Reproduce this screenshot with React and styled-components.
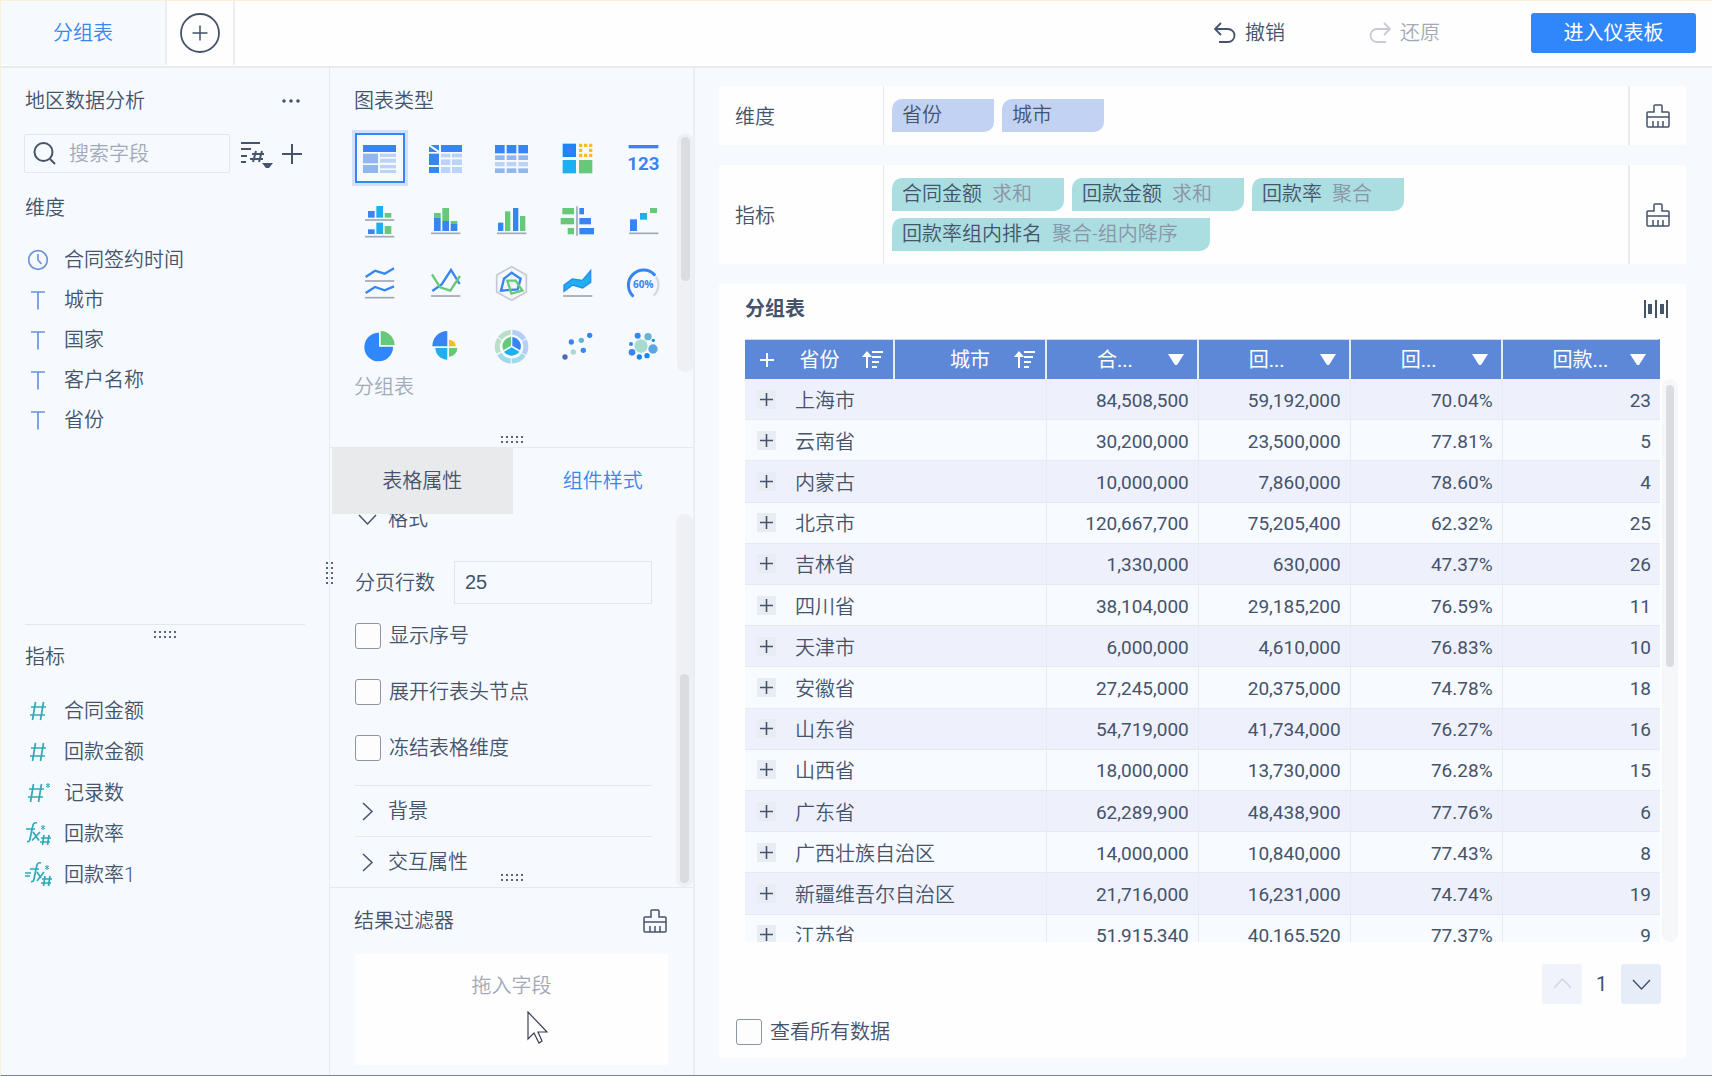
import React, {useState} from 'react'
import styled, {createGlobalStyle, css} from 'styled-components'

const GlobalStyle = createGlobalStyle`
  * {
    box-sizing: border-box;
  }
  body {
    margin: 0;
    color: #45536b;
    background: #f6fafe;
    font-family: Roboto, 'Noto Sans CJK SC', sans-serif;
    font-size: 20px;
    font-weight: 350;
    line-height: 30px;
  }
  button,
  input {
    font: inherit;
    color: inherit;
  }
  button {
    padding: 0;
    border: none;
    background: none;
    cursor: pointer;
  }
  h2,
  ul {
    margin: 0;
    padding: 0;
    font: inherit;
    list-style: none;
  }
  svg {
    display: block;
    flex: none;
  }
`

const Page = styled.div`
  display: flex;
  flex-direction: column;
  height: 100vh;
  min-height: 900px;
  border-top: 1px solid #f8f0d8;
  border-left: 1px solid #f8f0d8;
  border-bottom: 1px solid #7c8490;
`

const TopBar = styled.header`
  display: flex;
  align-items: center;
  flex: none;
  height: 67px;
  padding: 0 16px 1px 0;
  background: #fefefe;
  border-bottom: 2px solid #e9ecef;
`
const SheetTab = styled.button`
  align-self: stretch;
  width: 166px;
  color: #3685f2;
  background: #f6fafe;
  border-right: 2px solid #ebedf2;
`
const AddSheet = styled.div`
  display: flex;
  align-items: center;
  justify-content: center;
  align-self: stretch;
  width: 68px;
  margin-right: auto;
  border-right: 2px solid #ebedf2;
`
const HistoryButton = styled.button`
  display: flex;
  align-items: center;
  gap: 9px;
  margin-right: 84px;
  color: ${(p) => (p.disabled ? '#a3a9b8' : '#45536b')};
  svg {
    opacity: ${(p) => (p.disabled ? 0.6 : 1)};
  }
`
const PrimaryButton = styled.button`
  width: 165px;
  height: 40px;
  margin-left: 7px;
  color: #fff;
  font-weight: 400;
  background: #3086fb;
  border-radius: 3px;
`

const Columns = styled.div`
  display: flex;
  flex: 1;
  min-height: 0;
`
const FieldPanel = styled.aside`
  position: relative;
  display: flex;
  flex-direction: column;
  flex: none;
  width: 329px;
  border-right: 1px solid #e6e9ee;
`
const PanelHead = styled.div`
  display: flex;
  align-items: center;
  justify-content: space-between;
  flex: none;
  height: 66px;
  padding: 0 ${(p) => p.$end || 29}px 0 24px;
`
const SearchRow = styled.div`
  display: flex;
  align-items: center;
  gap: 9px;
  padding: 0 27px 0 23px;
`
const SearchBox = styled.label`
  display: flex;
  align-items: center;
  gap: 13px;
  flex: 1;
  min-width: 0;
  height: 39px;
  margin-right: 2px;
  padding-left: 8px;
  border: 1px solid #e6e6ea;
  border-radius: 2px;
  input {
    width: 100%;
    min-width: 0;
    padding: 0;
    border: none;
    outline: none;
    background: none;
  }
  input::placeholder {
    color: #a3a9b8;
    opacity: 1;
  }
`
const FieldGroup = styled.section`
  flex: ${(p) => (p.$measures ? '0 0 451px' : '1 1 0')};
  min-height: 0;
  margin: 0 24px;
  border-top: ${(p) => (p.$measures ? '1px solid #e6e6ea' : 'none')};
  h2 {
    margin: ${(p) => (p.$measures ? '4px 0 18px' : '20px 0 17px')};
  }
`
const FieldItem = styled.li`
  display: flex;
  align-items: center;
  gap: 13px;
  height: ${(p) => (p.$measures ? 41 : 40)}px;
`

const GripButton = styled.button`
  display: grid;
  grid-template-columns: repeat(${(p) => (p.$vertical ? 2 : 5)}, 2px);
  gap: 3px;
  i {
    width: 2px;
    height: 2px;
    background: #5a6579;
  }
  ${(p) =>
    p.$vertical
      ? css`
          position: absolute;
          right: -4px;
          top: 494px;
        `
      : css`
          margin: ${p.$space || '0 auto'};
        `}
`

const ConfigPanel = styled.aside`
  display: flex;
  flex-direction: column;
  flex: none;
  width: 365px;
  border-right: 2px solid #ebedf2;
`
const ChartSection = styled.section`
  flex: none;
  height: 380px;
  border-bottom: 1px solid #e6e9ee;
`
const ChartArea = styled.div`
  display: flex;
  justify-content: space-between;
  height: 238px;
`
const ChartGrid = styled.div`
  display: grid;
  grid-template-columns: repeat(5, 66px);
  grid-auto-rows: 50px;
  row-gap: 13px;
  place-items: center;
  margin: -1px 0 0 17px;
`
const ChartButton = styled.button`
  display: flex;
  align-items: center;
  justify-content: center;
  width: 50px;
  height: 50px;
  border: 2px solid ${(p) => (p.$active ? '#3685f2' : 'transparent')};
  box-shadow: ${(p) => (p.$active ? '0 0 0 3px #d3e2f9' : 'none')};
`
const ChartName = styled.div`
  padding-left: 24px;
  color: #a3a9b8;
`
const Scrollbar = styled.div`
  flex: none;
  width: ${(p) => p.$width || 17}px;
  margin-top: ${(p) => p.$top || 0}px;
  padding: ${(p) => p.$offset}px 4px 0;
  background: ${(p) => p.$track || '#eff0f4'};
  border-radius: 8px;
  &::before {
    content: '';
    display: block;
    height: ${(p) => p.$thumb}px;
    background: #dadce0;
    border-radius: 5px;
  }
`

const Tabs = styled.div`
  display: flex;
  flex: none;
  height: 66px;
  padding-left: 2px;
`
const TabButton = styled.button`
  flex: 1;
  color: ${(p) => (p.$active ? '#3685f2' : '#45536b')};
  background: ${(p) => (p.$active ? 'none' : '#e9eaec')};
`
const SettingsArea = styled.div`
  position: relative;
  display: flex;
  flex: 1;
  min-height: 0;
`
const Settings = styled.div`
  display: flex;
  flex-direction: column;
  justify-content: flex-end;
  flex: 1;
  min-width: 0;
  padding: 0 24px 0 25px;
  overflow: hidden;
`
/* resize handle floating over the scrolled settings */
const GripOverlay = styled.div`
  position: absolute;
  right: 0;
  bottom: 6px;
  left: 0;
  display: flex;
`
const GroupToggle = styled.button`
  display: flex;
  align-items: center;
  flex: none;
  gap: 8px;
  height: ${(p) => p.$height || 51}px;
  border-top: ${(p) => (p.$plain ? 'none' : '1px solid #e9e6e8')};
  margin-top: ${(p) => p.$gap || 0}px;
`
const PageSizeRow = styled.label`
  display: flex;
  align-items: center;
  justify-content: space-between;
  flex: none;
  margin: 22px 0 4px;
  input {
    width: 198px;
    height: 43px;
    padding: 0 10px;
    border: 1px solid #e4e5ea;
    background: none;
    font-family: 'Liberation Sans', sans-serif;
  }
`
const CheckLabel = styled.label`
  display: flex;
  align-items: center;
  flex: none;
  gap: 8px;
  height: 56px;
  input {
    appearance: none;
    width: 26px;
    height: 26px;
    margin: 0;
    border: 1px solid #8e96a5;
    border-radius: 3px;
    background: #fdfdfe;
  }
  input:checked {
    background: #3086fb;
  }
`
const FilterSection = styled.section`
  flex: none;
  height: 188px;
  border-top: 1px solid #e6e9ee;
`
const DropZone = styled.div`
  position: relative;
  height: 111px;
  margin: 0 25px;
  padding-top: 17px;
  color: #a3a9b8;
  text-align: center;
  background: #fefefe;
`
const Pointer = styled.svg`
  position: absolute;
  left: 172px;
  top: 57px;
`

const Main = styled.main`
  display: flex;
  flex-direction: column;
  flex: 1;
  gap: 20px;
  min-width: 0;
  padding: 18px 26px 17px 24px;
`
const Shelf = styled.section`
  display: flex;
  flex: none;
  background: #fefefe;
`
const ShelfName = styled.div`
  display: flex;
  align-items: center;
  flex: none;
  width: 165px;
  padding: 3px 0 0 16px;
  border-right: 1px solid #e6e8f0;
`
const ShelfFields = styled.div`
  display: flex;
  flex-wrap: wrap;
  flex: 1;
  gap: 7px 8px;
  padding: 13px 160px 13px 8px;
`
const Pill = styled.button`
  display: flex;
  gap: 10px;
  min-width: 102px;
  height: 33px;
  padding: 0 32px 0 10px;
  line-height: 33px;
  background: ${(p) => (p.$measure ? '#abdee0' : '#c2d2f3')};
  border-radius: 10px 0 10px 0;
  span {
    color: #8c94a8;
  }
`
const ClearButton = styled.button`
  display: flex;
  align-items: center;
  justify-content: center;
  width: 58px;
  border-left: 2px solid #e9eaee;
`

const Sheet = styled.section`
  display: flex;
  flex-direction: column;
  flex: 1;
  min-height: 0;
  background: #fefefe;
`
const SheetHead = styled.div`
  display: flex;
  align-items: center;
  justify-content: space-between;
  flex: none;
  height: 55px;
  padding: 0 17px 6px 26px;
  font-weight: 700;
`
const TableArea = styled.div`
  display: flex;
  flex: 1;
  gap: 2px;
  min-height: 0;
  padding: 0 8px 0 26px;
`
const TableClip = styled.div`
  flex: 1;
  min-width: 0;
  overflow: hidden;
`
const Table = styled.table`
  width: 100%;
  height: 617px;
  table-layout: fixed;
  border-collapse: separate;
  border-spacing: 0;
  font-size: 19px;
  font-weight: 400;
  th,
  td {
    padding: 0;
  }
  th {
    height: 40px;
    padding-top: 1px;
    color: #fff;
    font-size: 20px;
    font-weight: 400;
    background: #5d88d7;
    border-right: 2px solid #e3eefb;
    border-top: 1px solid #cfdcf3;
  }
  th:last-child {
    border-right-color: transparent;
  }
  td {
    padding: 3px 9px 0;
    text-align: right;
    background: #f7fafe;
    border-right: 1px solid #e9ebf3;
    border-bottom: 1px solid #e6e9f2;
  }
  td:last-child {
    border-right: none;
  }
  tr:nth-child(odd) td {
    background: #eef1fc;
  }
`
const HeadCell = styled.div`
  display: flex;
  align-items: center;
  justify-content: space-between;
  padding: 0 10px 0 ${(p) => (p.$measure ? 50 : 11)}px;
  button {
    display: flex;
    justify-content: center;
    width: 21px;
  }
`
const Spacer = styled.span`
  width: 20px;
`
const RowName = styled.div`
  display: flex;
  align-items: center;
  gap: 19px;
  padding-left: 3px;
  font-size: 20px;
  font-weight: 350;
  button {
    display: flex;
    align-items: center;
    justify-content: center;
    width: 19px;
    height: 19px;
    margin-bottom: 3px;
    background: #e8ecf3;
  }
`
const Pager = styled.nav`
  display: flex;
  align-items: center;
  justify-content: flex-end;
  flex: none;
  margin: 22px 25px 0 0;
  font-weight: 400;
  span {
    width: 39px;
    text-align: center;
  }
`
const PageButton = styled.button`
  display: flex;
  align-items: center;
  justify-content: center;
  width: 40px;
  height: 40px;
  color: ${(p) => (p.disabled ? '#d2d5e0' : '#45536b')};
  background: ${(p) => (p.disabled ? '#f0f2fc' : '#e6edf9')};
  border-radius: 3px;
`
const SheetFoot = styled.div`
  flex: none;
  height: 54px;
  padding-left: 17px;
`

const BLUE = '#3685f2'
const GREEN = '#66c878'
const CYAN = '#1cb0f0'
const YELLOW = '#f8bd22'
const AXIS = '#a0a7b5'
const MID = '#92b6f0'
const PALE = '#bcd3f8'

const dimensions = [
  {name: '合同签约时间', icon: 'clock'},
  {name: '城市', icon: 'text'},
  {name: '国家', icon: 'text'},
  {name: '客户名称', icon: 'text'},
  {name: '省份', icon: 'text'},
]
const measures = [
  {name: '合同金额', icon: 'number'},
  {name: '回款金额', icon: 'number'},
  {name: '记录数', icon: 'count'},
  {name: '回款率', icon: 'formula'},
  {name: '回款率1', icon: 'quick'},
]
const measurePills = [
  ['合同金额', '求和'],
  ['回款金额', '求和'],
  ['回款率', '聚合'],
  ['回款率组内排名', '聚合-组内降序'],
]
const rows = [
  ['上海市', '84,508,500', '59,192,000', '70.04%', '23'],
  ['云南省', '30,200,000', '23,500,000', '77.81%', '5'],
  ['内蒙古', '10,000,000', '7,860,000', '78.60%', '4'],
  ['北京市', '120,667,700', '75,205,400', '62.32%', '25'],
  ['吉林省', '1,330,000', '630,000', '47.37%', '26'],
  ['四川省', '38,104,000', '29,185,200', '76.59%', '11'],
  ['天津市', '6,000,000', '4,610,000', '76.83%', '10'],
  ['安徽省', '27,245,000', '20,375,000', '74.78%', '18'],
  ['山东省', '54,719,000', '41,734,000', '76.27%', '16'],
  ['山西省', '18,000,000', '13,730,000', '76.28%', '15'],
  ['广东省', '62,289,900', '48,438,900', '77.76%', '6'],
  ['广西壮族自治区', '14,000,000', '10,840,000', '77.43%', '8'],
  ['新疆维吾尔自治区', '21,716,000', '16,231,000', '74.74%', '19'],
  ['江苏省', '51,915,340', '40,165,520', '77.37%', '9'],
]

// bars: [x, y, width, height, color]
const Bars = ({items}) =>
  items.map(([x, y, width, height, fill], index) => (
    <rect key={index} x={x} y={y} width={width} height={height} fill={fill} />
  ))

const Dots = ({items}) =>
  items.map(([cx, cy, r, fill], index) => (
    <circle key={index} cx={cx} cy={cy} r={r} fill={fill} />
  ))

const Axis = ({y}) => <path d={`M15 ${y}H103`} stroke={AXIS} strokeWidth='5' />

// every drawing sits on a 120 x 120 canvas
const charts = [
  {
    name: '分组表',
    art: (
      <Bars
        items={[
          [9, 21, 99, 21, BLUE],
          [9, 47, 45, 29, MID],
          [9, 81, 45, 24, MID],
          [60, 47, 48, 10, PALE],
          [60, 62, 48, 12, PALE],
          [60, 81, 48, 10, PALE],
          [60, 96, 48, 9, PALE],
        ]}
      />
    ),
  },
  {
    name: '交叉表',
    art: (
      <>
        <Bars
          items={[
            [45, 21, 63, 21, BLUE],
            [9, 47, 30, 34, BLUE],
            [9, 87, 30, 18, BLUE],
            [45, 47, 28, 11, PALE],
            [78, 47, 30, 11, PALE],
            [45, 64, 28, 17, PALE],
            [78, 64, 30, 17, PALE],
            [45, 87, 28, 18, PALE],
            [78, 87, 30, 18, PALE],
          ]}
        />
        <path d='M9 25V42H34ZM14 21H39V38Z' fill={BLUE} />
      </>
    ),
  },
  {
    name: '明细表',
    art: (
      <Bars
        items={[9, 44, 79].flatMap((x) => [
          [x, 21, 29, 25, BLUE],
          [x, 52, 29, 14, MID],
          [x, 72, 29, 13, PALE],
          [x, 91, 29, 14, MID],
        ])}
      />
    ),
  },
  {
    name: '颜色表格',
    art: (
      <>
        <Bars
          items={[
            [14, 17, 40, 40, '#1c86f2'],
            [14, 66, 40, 40, CYAN],
            [63, 66, 40, 40, GREEN],
          ]}
        />
        <rect x='26' y='29' width='17' height='17' fill='#3f7cf5' />
        <rect
          x='68'
          y='22'
          width='30'
          height='30'
          fill='none'
          stroke={YELLOW}
          strokeWidth='10'
          strokeDasharray='10 5'
          strokeDashoffset='5'
        />
      </>
    ),
  },
  {
    name: 'KPI指标卡',
    art: (
      <>
        <rect x='14' y='21' width='89' height='10' fill={BLUE} />
        <text
          x='58'
          y='97'
          fill={BLUE}
          fontSize='56'
          fontWeight='700'
          textAnchor='middle'
          fontFamily='Roboto, sans-serif'
        >
          123
        </text>
      </>
    ),
  },
  {
    name: '分区柱形图',
    art: (
      <>
        <Bars
          items={[
            [24, 30, 20, 20, BLUE],
            [49, 15, 20, 35, CYAN],
            [74, 36, 20, 14, GREEN],
            [24, 85, 20, 14, BLUE],
            [49, 65, 20, 34, CYAN],
            [74, 75, 20, 24, GREEN],
          ]}
        />
        <Axis y={57} />
        <Axis y={107} />
      </>
    ),
  },
  {
    name: '堆积柱形图',
    art: (
      <>
        <Bars
          items={[
            [24, 36, 20, 14, GREEN],
            [24, 50, 20, 40, BLUE],
            [49, 21, 20, 39, GREEN],
            [49, 60, 20, 30, BLUE],
            [74, 60, 20, 9, GREEN],
            [74, 69, 20, 21, BLUE],
          ]}
        />
        <Axis y={97} />
      </>
    ),
  },
  {
    name: '多系列柱形图',
    art: (
      <>
        <Bars
          items={[
            [18, 65, 16, 25, BLUE],
            [39, 31, 16, 59, GREEN],
            [63, 21, 16, 69, BLUE],
            [84, 45, 16, 45, GREEN],
          ]}
        />
        <Axis y={97} />
      </>
    ),
  },
  {
    name: '对比柱状图',
    art: (
      <>
        <Bars
          items={[
            [13, 21, 35, 19, GREEN],
            [8, 51, 40, 19, GREEN],
            [29, 81, 19, 19, GREEN],
            [64, 21, 14, 19, BLUE],
            [64, 51, 35, 19, BLUE],
            [64, 81, 44, 19, BLUE],
          ]}
        />
        <path d='M57 16V104' stroke={AXIS} strokeWidth='5' />
      </>
    ),
  },
  {
    name: '瀑布图',
    art: (
      <>
        <Bars
          items={[
            [18, 55, 21, 35, BLUE],
            [48, 36, 21, 20, CYAN],
            [78, 21, 21, 15, GREEN],
          ]}
        />
        <Axis y={97} />
      </>
    ),
  },
  {
    name: '分区折线图',
    art: (
      <>
        <path
          d='M17 39L45 20L74 29L102 13M17 87L45 69L74 79L102 67'
          fill='none'
          stroke={BLUE}
          strokeWidth='7'
        />
        <Axis y={51} />
        <Axis y={101} />
      </>
    ),
  },
  {
    name: '多系列折线图',
    art: (
      <>
        <path d='M19 81L47 61L75 18L101 60' fill='none' stroke={BLUE} strokeWidth='7' />
        <path d='M18 31L42 70L73 80L102 36' fill='none' stroke={GREEN} strokeWidth='7' />
        <Axis y={96} />
      </>
    ),
  },
  {
    name: '雷达图',
    art: (
      <g fill='none'>
        <path d='M59 8L103 33V84L59 109L14 84V33Z' stroke='#c3c9d2' strokeWidth='5' />
        <path d='M59 8V109M14 33L103 84M103 33L14 84' stroke='#dfe2e8' strokeWidth='2' />
        <path d='M59 26L86 44L77 76L27 80L36 44Z' stroke={BLUE} strokeWidth='7' />
        <path d='M46 50H71L91 80L58 89Z' stroke={GREEN} strokeWidth='7' />
      </g>
    ),
  },
  {
    name: '面积图',
    art: (
      <>
        <path
          d='M18 63L43 45L73 49L98 20V55L74 72L44 63L18 82Z'
          fill={CYAN}
          stroke='#2a8bf0'
          strokeWidth='4'
        />
        <Axis y={96} />
      </>
    ),
  },
  {
    name: '仪表盘',
    art: (
      <>
        <path
          d='M26 95A45 45 0 0 1 91 32'
          fill='none'
          stroke={BLUE}
          strokeWidth='9'
          strokeLinecap='round'
        />
        <path d='M96 38A45 45 0 0 1 89 95' fill='none' stroke='#d5d9e0' strokeWidth='7' />
        <text
          x='58'
          y='72'
          fill={BLUE}
          fontSize='30'
          fontWeight='700'
          textAnchor='middle'
          fontFamily='Open Sans, sans-serif'
        >
          60%
        </text>
      </>
    ),
  },
  {
    name: '饼图',
    art: (
      <>
        <path d='M57 59V17A43 43 0 1 0 99 59Z' fill='#3086fb' />
        <path d='M62 54V12A43 43 0 0 1 104 54Z' fill={GREEN} />
      </>
    ),
  },
  {
    name: '玫瑰图',
    art: (
      <>
        <path d='M64 58V12A45 45 0 0 0 19 58Z' fill={BLUE} />
        <path d='M69 58V38A20 20 0 0 1 89 58Z' fill={YELLOW} />
        <path d='M64 63V98A36 36 0 0 1 28 63Z' fill={CYAN} />
        <path d='M69 63V89A25 25 0 0 0 94 63Z' fill={GREEN} />
      </>
    ),
  },
  {
    name: '多层饼图',
    art: (
      <>
        <g fill='none' strokeWidth='15' strokeDasharray='42 3'>
          <path d='M61 16A43 43 0 0 1 96 80' stroke='#b3cef8' />
          <path d='M95 83A43 43 0 0 1 22 81' stroke='#9fd9ee' />
          <path d='M20 77A43 43 0 0 1 56 16' stroke='#b9dfc9' />
        </g>
        <path d='M61 56V30A28 28 0 0 1 84 70Z' fill={BLUE} />
        <path d='M59 61L82 74A28 28 0 0 1 36 74Z' fill={CYAN} />
        <path d='M57 56L34 70A28 28 0 0 1 57 30Z' fill={GREEN} />
      </>
    ),
  },
  {
    name: '散点图',
    art: (
      <Dots
        items={[
          [21, 90, 8, '#4a6cb8'],
          [46, 75, 8, '#a8d8d4'],
          [40, 45, 8, BLUE],
          [70, 40, 8, '#62b4cf'],
          [76, 70, 8, BLUE],
          [95, 25, 8, BLUE],
        ]}
      />
    ),
  },
  {
    name: '聚合气泡图',
    art: (
      <Dots
        items={[
          [51, 57, 20, '#a8dad0'],
          [41, 26, 9, BLUE],
          [72, 29, 11, '#68b4d2'],
          [88, 40, 5, '#1c86e2'],
          [87, 66, 14, '#5aa6e6'],
          [69, 86, 8, '#1c86e2'],
          [46, 90, 8, '#1c86e2'],
          [24, 76, 10, BLUE],
          [21, 51, 6, BLUE],
        ]}
      />
    ),
  },
]

const Stroke = ({width, height, children, ...rest}) => (
  <svg
    width={width}
    height={height}
    viewBox={`0 0 ${width} ${height}`}
    fill='none'
    stroke='currentColor'
    strokeWidth='1.5'
    {...rest}
  >
    {children}
  </svg>
)

const fieldIcons = {
  clock: (
    <>
      <circle cx='13' cy='13' r='9.3' />
      <path d='M13 7V13L16.5 17' />
    </>
  ),
  text: <path d='M6 5H20M13 5V22.5' />,
  number: <path d='M10.5 4L7.5 22M18.5 4L15.5 22M6 9H21M5 17H20' />,
  count: (
    <>
      <path d='M8.5 4L5.5 22M16.5 4L13.5 22M4 9H19M3 17H18' />
      <path d='M23 3V8M21 4L25 7M25 4L21 7' strokeWidth='1' />
    </>
  ),
  formula: (
    <>
      <path d='M12 2C9 1 8 3 7.5 6L5 18C4.5 20.5 3.5 21 2 20.5M1 8H10' />
      <path d='M8 11L14 19.5M15 11L7 19.5' />
      <path d='M19 14L17.5 24M24 14L22.5 24M16 17H26M15 21H25' />
      <path d='M18 4V9M16 5L20 8M20 5L16 8' strokeWidth='1' />
    </>
  ),
  quick: (
    <>
      <path d='M16 1C13 0 12 2 11.5 5L9 17C8.5 19.5 7.5 20 6 19.5M5 7H14M0 11H6M0 14H5' />
      <path d='M12 10L16 16M19 10L12 19' />
      <path d='M20 14L18.5 24M25 14L23.5 24M17 17H27M16 21H26' />
      <path d='M22 3V8M20 4L24 7M24 4L20 7' strokeWidth='1' />
    </>
  ),
}

const FieldIcon = ({type, color}) => (
  <Stroke width={26} height={26} color={color} overflow='visible' strokeWidth='1.7'>
    {fieldIcons[type]}
  </Stroke>
)

const Brush = () => (
  <Stroke width={24} height={24}>
    <path d='M1 22V9Q1 8 2 8H8V2Q8 1 9 1H15Q16 1 16 2V8H22Q23 8 23 9V22Q23 23 22 23H2Q1 23 1 22ZM1 13H23M7 17V23M12 17V23M17 17V23' />
  </Stroke>
)

const Plus = ({size, weight = 1.5}) => (
  <Stroke width={size} height={size} strokeWidth={weight}>
    <path d={`M${size / 2} 0V${size}M0 ${size / 2}H${size}`} />
  </Stroke>
)

const Chevron = ({d}) => (
  <Stroke width={25} height={24}>
    <path d={d} />
  </Stroke>
)

const SortIcon = () => (
  <Stroke width={21} height={18} strokeWidth='2'>
    <path d='M5 17V4M10 1H21M10 6H19M10 11H17M10 16H15' />
    <path d='M0 6L5 0L10 6Z' fill='currentColor' stroke='none' />
  </Stroke>
)

const Grip = ({vertical, space, label}) => (
  <GripButton $vertical={vertical} $space={space} aria-label={label}>
    {Array.from({length: 10}, (_, index) => (
      <i key={index} />
    ))}
  </GripButton>
)

const Fields = () => (
  <FieldPanel>
    <PanelHead>
      <h2>地区数据分析</h2>
      <button aria-label='更多'>
        <Stroke width={18} height={4} fill='currentColor' stroke='none'>
          <circle cx='2' cy='2' r='1.8' />
          <circle cx='9' cy='2' r='1.8' />
          <circle cx='16' cy='2' r='1.8' />
        </Stroke>
      </button>
    </PanelHead>
    <SearchRow>
      <SearchBox>
        <Stroke width={23} height={23} strokeWidth='2'>
          <circle cx='10.5' cy='10' r='9' />
          <path d='M17 17L22 22' />
        </Stroke>
        <input type='text' placeholder='搜索字段' aria-label='搜索字段' />
      </SearchBox>
      <button aria-label='排序'>
        <Stroke width={32} height={28} strokeWidth='2'>
          <path d='M0 3H19M0 9H10M0 16H6M0 22H5' />
          <path d='M15 11L12 22M21 11L18 22M11 14H23M9 19H22' />
          <path d='M21 23H32L28 28H25Z' fill='currentColor' stroke='none' />
        </Stroke>
      </button>
      <button aria-label='添加字段'>
        <Plus size={20} weight={2} />
      </button>
    </SearchRow>
    <FieldGroup>
      <h2>维度</h2>
      <ul>
        {dimensions.map(({name, icon}) => (
          <FieldItem key={name}>
            <FieldIcon type={icon} color='#6a94dc' />
            {name}
          </FieldItem>
        ))}
      </ul>
    </FieldGroup>
    <FieldGroup $measures>
      <Grip space='6px auto 0' label='调整高度' />
      <h2>指标</h2>
      <ul>
        {measures.map(({name, icon}) => (
          <FieldItem key={name} $measures>
            <FieldIcon type={icon} color='#2fa9ba' />
            {name}
          </FieldItem>
        ))}
      </ul>
    </FieldGroup>
    <Grip vertical label='调整宽度' />
  </FieldPanel>
)

const Config = () => {
  const [chart, setChart] = useState('分组表')
  const [tab, setTab] = useState('组件样式')

  return (
    <ConfigPanel>
      <ChartSection>
        <PanelHead>
          <h2>图表类型</h2>
        </PanelHead>
        <ChartArea>
          <ChartGrid>
            {charts.map(({name, art}) => (
              <ChartButton
                key={name}
                aria-label={name}
                $active={chart === name}
                onClick={() => setChart(name)}
              >
                <svg width='40' height='40' viewBox='0 0 120 120'>
                  {art}
                </svg>
              </ChartButton>
            ))}
          </ChartGrid>
          <Scrollbar $offset={3} $thumb={144} />
        </ChartArea>
        <ChartName>{chart}</ChartName>
        <Grip space='34px auto 0' label='调整高度' />
      </ChartSection>
      <Tabs>
        {['表格属性', '组件样式'].map((name) => (
          <TabButton key={name} $active={tab === name} onClick={() => setTab(name)}>
            {name}
          </TabButton>
        ))}
      </Tabs>
      <SettingsArea>
        <Settings>
          <GroupToggle $plain $height={40}>
            <Chevron d='M4 8L12.5 17L21 8' />
            格式
          </GroupToggle>
          <PageSizeRow>
            分页行数
            <input type='text' defaultValue='25' />
          </PageSizeRow>
          {['显示序号', '展开行表头节点', '冻结表格维度'].map((name) => (
            <CheckLabel key={name}>
              <input type='checkbox' />
              {name}
            </CheckLabel>
          ))}
          <GroupToggle $gap={9}>
            <Chevron d='M8 4L17 12.5L8 21' />
            背景
          </GroupToggle>
          <GroupToggle>
            <Chevron d='M8 4L17 12.5L8 21' />
            交互属性
          </GroupToggle>
        </Settings>
        <Scrollbar $offset={160} $thumb={209} />
        <GripOverlay>
          <Grip label='调整高度' />
        </GripOverlay>
      </SettingsArea>
      <FilterSection>
        <PanelHead $end={26}>
          <h2>结果过滤器</h2>
          <button aria-label='清空过滤器'>
            <Brush />
          </button>
        </PanelHead>
        <DropZone>
          拖入字段
          <Pointer width='22' height='33' viewBox='0 0 22 33'>
            <path
              d='M1 1V28L7 22L12 32L15 30L11 21H20Z'
              fill='#fefefe'
              stroke='#3b4258'
              strokeWidth='1.2'
            />
          </Pointer>
        </DropZone>
      </FilterSection>
    </ConfigPanel>
  )
}

const DataTable = () => (
  <Table>
    <colgroup>
      <col style={{width: '16.4%'}} />
      <col style={{width: '16.6%'}} />
      <col style={{width: '16.6%'}} />
      <col style={{width: '16.6%'}} />
      <col style={{width: '16.6%'}} />
      <col />
    </colgroup>
    <thead>
      <tr>
        <th>
          <HeadCell>
            <button aria-label='全部展开'>
              <Plus size={14} weight={2} />
            </button>
            省份
            <button aria-label='省份排序'>
              <SortIcon />
            </button>
          </HeadCell>
        </th>
        <th>
          <HeadCell>
            <Spacer />
            城市
            <button aria-label='城市排序'>
              <SortIcon />
            </button>
          </HeadCell>
        </th>
        {['合...', '回...', '回...', '回款...'].map((name, index) => (
          <th key={index}>
            <HeadCell $measure>
              {name}
              <button aria-label='指标菜单'>
                <svg width='16' height='12' viewBox='0 0 16 12'>
                  <path d='M0 0H16L9 11H7Z' fill='#fff' />
                </svg>
              </button>
            </HeadCell>
          </th>
        ))}
      </tr>
    </thead>
    <tbody>
      {rows.map(([name, ...values]) => (
        <tr key={name}>
          <td colSpan={2}>
            <RowName>
              <button aria-label={`展开${name}`}>
                <Plus size={13} weight={1.6} />
              </button>
              {name}
            </RowName>
          </td>
          {values.map((value, index) => (
            <td key={index}>{value}</td>
          ))}
        </tr>
      ))}
    </tbody>
  </Table>
)

const App = () => (
  <Page>
    <GlobalStyle />
    <TopBar>
      <SheetTab>分组表</SheetTab>
      <AddSheet>
        <button aria-label='新建组件'>
          <Stroke width={40} height={40}>
            <circle cx='20' cy='20' r='19' strokeWidth='1.8' />
            <path d='M20 12.5V27.5M12.5 20H27.5' />
          </Stroke>
        </button>
      </AddSheet>
      <HistoryButton>
        <Stroke width={22} height={22} strokeWidth='1.8'>
          <path d='M7 1L1 7L7 13M1 7H14A6.5 6.5 0 0 1 14 20H5' />
        </Stroke>
        撤销
      </HistoryButton>
      <HistoryButton disabled>
        <Stroke width={22} height={22} strokeWidth='1.8'>
          <path d='M15 1L21 7L15 13M21 7H8A6.5 6.5 0 0 0 8 20H17' />
        </Stroke>
        还原
      </HistoryButton>
      <PrimaryButton>进入仪表板</PrimaryButton>
    </TopBar>
    <Columns>
      <Fields />
      <Config />
      <Main>
        <Shelf>
          <ShelfName>维度</ShelfName>
          <ShelfFields>
            <Pill>省份</Pill>
            <Pill>城市</Pill>
          </ShelfFields>
          <ClearButton aria-label='清空维度'>
            <Brush />
          </ClearButton>
        </Shelf>
        <Shelf>
          <ShelfName>指标</ShelfName>
          <ShelfFields>
            {measurePills.map(([name, method]) => (
              <Pill key={name} $measure>
                {name}
                <span>{method}</span>
              </Pill>
            ))}
          </ShelfFields>
          <ClearButton aria-label='清空指标'>
            <Brush />
          </ClearButton>
        </Shelf>
        <Sheet>
          <SheetHead>
            <h2>分组表</h2>
            <button aria-label='列宽'>
              <svg width='26' height='18' viewBox='0 0 26 18' fill='#45536b'>
                <path d='M1 0H3V18H1ZM12 0H14V18H12ZM23 0H25V18H23ZM5 4H9V14H5ZM17 4H21V14H17Z' />
              </svg>
            </button>
          </SheetHead>
          <TableArea>
            <TableClip>
              <DataTable />
            </TableClip>
            <Scrollbar $width={16} $top={40} $offset={6} $thumb={282} $track='#f6f7f9' />
          </TableArea>
          <Pager>
            <PageButton disabled aria-label='上一页'>
              <Chevron d='M4 16L12.5 7L21 16' />
            </PageButton>
            <span>1</span>
            <PageButton aria-label='下一页'>
              <Chevron d='M4 8L12.5 17L21 8' />
            </PageButton>
          </Pager>
          <SheetFoot>
            <CheckLabel>
              <input type='checkbox' />
              查看所有数据
            </CheckLabel>
          </SheetFoot>
        </Sheet>
      </Main>
    </Columns>
  </Page>
)

export default App
